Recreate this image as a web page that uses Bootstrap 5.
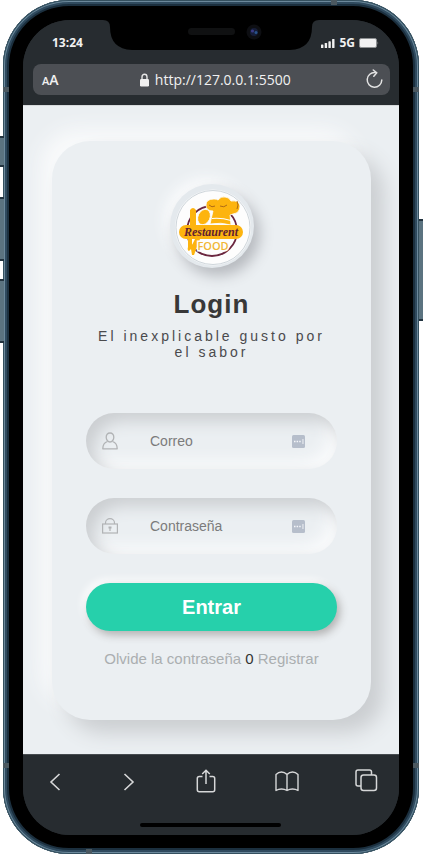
<!DOCTYPE html>
<html lang="es">
<head>
<meta charset="utf-8">
<meta name="viewport" content="width=device-width, initial-scale=1">
<title>Login</title>
<link href="https://cdn.jsdelivr.net/npm/bootstrap@5.3.0/dist/css/bootstrap.min.css" rel="stylesheet">
<style>
  body { font-family: "Liberation Sans", Arial, sans-serif; background: #fff; overflow-x: hidden; }

  /* Phone body */
  .phone { margin: 0 4px 0 3px; padding: 20px 20px 19px; border-radius: 66px; background: #000;
    box-shadow: inset 0 0 0 1px #34505f, inset 0 0 0 2px #6b889b, inset 0 0 0 4px #2f4a5e, inset 0 0 0 6px #1b2f3e; }
  .side-key { position: absolute; width: 4px; background: #5b7380; border-top: 2px solid #22333f; border-bottom: 2px solid #22333f; }
  .key-mute { left: -3px; top: 136px; height: 31px; }
  .key-up { left: -3px; top: 197px; height: 64px; }
  .key-down { left: -3px; top: 279px; height: 64px; }
  .key-power { right: -4px; top: 219px; height: 102px; }
  .band { position: absolute; width: 6px; height: 5px; background: #4b5860; }
  .band-tl { left: 0; top: 87px; } .band-tr { right: 0; top: 87px; }
  .band-bl { left: 0; bottom: 86px; } .band-br { right: 0; bottom: 86px; }
  .band-top { right: 82px; top: 0; } .band-bottom { left: 83px; bottom: 0; }
  .notch { position: absolute; top: 19px; left: 50%; transform: translateX(-50%); }

  /* Browser chrome */
  .screen { border-radius: 47px; background: #272c30; }
  .browser-top, .browser-bottom { font-family: "Open Sans", "Noto Sans", sans-serif; color: #f1f1f1; background: #272c30; }
  .status { height: 44px; padding: 13px 20px 0 29px; font-size: 12px; line-height: 20px; font-weight: 700; }
  .address { height: 31px; margin: 0 9px 10px 10px; padding: 0 7px 0 9px; border-radius: 8px; background: #4c4f54; font-size: 14px; line-height: 20px; font-weight: 500; }
  .address a { color: #f1f1f1; gap: 6px; padding-left: 6px; }
  .plain-btn { background: none; border: 0; padding: 0; color: inherit; line-height: 1; display: flex; align-items: center; justify-content: center; }
  .text-size { font-size: 11px; font-weight: 600; align-items: baseline; }
  .text-size span { font-size: 14px; }
  .browser-bottom { height: 81px; padding: 13px 21px 8px 20px; border-top: 1px solid #464b4f; }
  .tools { display: grid; grid-template-columns: 74fr 77fr 81fr 79fr 24px; color: #d6d7d8; }
  .tools button { width: 24px; height: 26px; }
  .home-bar { width: 141px; height: 4px; border-radius: 4px; background: #000; }

  /* Login page */
  .site { background: #ebeff2; padding: 35px 28px 34px 29px; overflow: hidden; border-top: 1px solid #d7dadc; }
  .login-box { padding: 43px 34px 51px; border-radius: 38px; background: #ebeff2;
    box-shadow: 13px 13px 20px #cbced1, -12px -12px 20px #f9fafb; }
  .brand-logo { width: 84px; height: 84px; border-radius: 50%; background: #e4e9ed; box-shadow: 6px 8px 14px #b7babf, -6px -6px 14px #fafbfc; }
  .heading { margin: 20px 0 8px; font-size: 26px; line-height: 32px; font-weight: 700; letter-spacing: 1px; color: #383838; }
  .tagline { margin: 0 0 53px; font-size: 14px; line-height: 16px; letter-spacing: 3px; color: #4a4a4d; }
  .field { height: 56px; padding: 0 32px 0 16px; border-radius: 28px; margin-bottom: 29px; color: #b1b3b5;
    box-shadow: inset 8px 8px 16px #cbced1, inset -8px -8px 16px #fafbfc; }
  .field svg { flex-shrink: 0; }
  .field input { width: 100px; min-width: 0; margin-left: 32px; padding: 0; border: 0; outline: 0; background: transparent; font-size: 14px; line-height: 20px; color: #555; }
  .field input::placeholder { color: #7b7b7b; opacity: 1; }
  .enter { height: 48px; border: 0; border-radius: 24px; background: #26d0ab; color: #fff; font-size: 20px; line-height: 24px; font-weight: 700;
    box-shadow: 3px 4px 8px #b1b1b1, -3px -3px 8px #fff; }
  .help { margin-top: 18px; font-size: 15px; line-height: 20px; color: #333; white-space: nowrap; }
  .help a { color: #aaaeb0; }
</style>
<script src="https://cdn.jsdelivr.net/npm/bootstrap@5.3.0/dist/js/bootstrap.bundle.min.js"></script>
</head>
<body>
<div class="phone position-relative min-vh-100 d-flex flex-column">
  <span class="side-key key-mute"></span><span class="side-key key-up"></span><span class="side-key key-down"></span><span class="side-key key-power"></span>
  <span class="band band-tl"></span><span class="band band-tr"></span><span class="band band-bl"></span><span class="band band-br"></span>
  <span class="band band-top"></span><span class="band band-bottom"></span>

  <div class="screen flex-grow-1 d-flex flex-column overflow-hidden">
    <header class="browser-top">
      <div class="status d-flex justify-content-between align-items-start">
        <span>13:24</span>
        <span class="d-flex align-items-center gap-1">
          <svg width="14" height="9" viewBox="0 0 14 9" fill="#f1f1f1" aria-hidden="true"><rect y="5.5" width="2.4" height="3.5" rx=".6"/><rect x="3.7" y="4" width="2.4" height="5" rx=".6"/><rect x="7.4" y="2.3" width="2.4" height="6.7" rx=".6"/><rect x="11.1" y="0" width="2.4" height="9" rx=".6"/></svg>
          <span>5G</span>
          <svg width="20" height="10" viewBox="0 0 20 10" aria-hidden="true"><rect x=".5" y=".5" width="17" height="9" rx="1.5" fill="#f1f1f1" stroke="#8c8f91"/><path d="M18.5 3.2q1.5 1.8 0 3.6z" fill="#8c8f91"/></svg>
        </span>
      </div>
      <div class="address d-flex align-items-center justify-content-between">
        <button class="plain-btn text-size" type="button" aria-label="Tamaño del texto">A<span>A</span></button>
        <a class="d-flex align-items-center text-decoration-none" href="#">
          <svg width="9" height="14" viewBox="0 0 9 14" aria-hidden="true"><path d="M2 6.5V4a2.5 2.7 0 0 1 5 0v2.5" fill="none" stroke="#e6e6e6" stroke-width="1.4"/><rect y="6" width="9" height="7.5" rx="1.2" fill="#f1f1f1"/></svg>
          http://127.0.0.1:5500</a>
        <button class="plain-btn" type="button" aria-label="Recargar">
          <svg width="17" height="21" viewBox="0 0 17 21" fill="none" stroke="#e2e2e2" stroke-width="1.5" stroke-linecap="round" stroke-linejoin="round"><path d="M9.2 3.6A7.3 7.3 0 1 0 15.8 11"/><path d="M7.3 1l3.500 2.800-3 3.400"/></svg>
        </button>
      </div>
    </header>

    <main class="site flex-grow-1">
      <section class="login-box text-center">
        <svg class="brand-logo" viewBox="0 0 84 84" role="img" aria-label="Restaurent Food">
          <circle cx="43" cy="43.500" r="38" fill="#f8f9fa"/>
          <circle cx="43" cy="43.500" r="37" fill="#fdfdfd" stroke="#c3cbd2" stroke-width=".8"/>
          <circle cx="42" cy="47" r="25" fill="none" stroke="#6b2740" stroke-width="1.800"/>
          <g fill="#fdb40f">
            <path d="M20 26q3-4 6 0v18h-6zM22 23v8M26 23v8"/>
            <ellipse cx="34" cy="33" rx="6" ry="8" transform="rotate(25 34 33)" stroke="#fdfdfd" stroke-width=".8"/>
            <path d="M40 40l3-13q-7 0-7-6 0-6 8-6 3 0 4 1 3-4 7-3 4 0 6 4 8-1 9 5 0 7-7 8l-3 1 1 10q-10-3-21-1z" stroke="#fdfdfd" stroke-width=".8"/>
            <path d="M18 55h4v6l3-6h5l-6 16h-2l-1-6-2 2q-2-1-1-4z"/>
          </g>
          <path d="M42 34.500q9-1 19 2" fill="none" stroke="#fff" stroke-width="1.200"/>
          <path d="M67 17q2 4 0 8M39 21q3 3 6 1M50 22q4 2 7-1" fill="none" stroke="#ad6b17" stroke-width="1"/>
          <rect x="9" y="41" width="64" height="14" rx="7" fill="#fdb40f"/>
          <text x="41" y="52" text-anchor="middle" font-family="Liberation Serif, serif" font-size="12" font-style="italic" font-weight="700" fill="#5f2132">Restaurent</text>
          <text x="43" y="66" text-anchor="middle" font-family="Open Sans, sans-serif" font-size="11" font-weight="600" fill="#f1b633" stroke="#fdfdfd" stroke-width="3" paint-order="stroke">FOOD</text>
        </svg>
        <h1 class="heading">Login</h1>
        <p class="tagline px-2">El inexplicable gusto por el sabor</p>
        <form>
          <div class="field d-flex align-items-center">
            <label for="correo" class="d-flex">
              <svg width="16" height="18" viewBox="0 0 16 18" fill="none" stroke="currentColor" stroke-width="1.300" stroke-linejoin="round" role="img" aria-label="Correo"><path d="M8 1C5.500 1 4.200 2.800 4.200 5.200S5.800 10 8 10s3.800-2.400 3.800-4.800S10.500 1 8 1z"/><path d="M5.500 9.500Q.8 11 .8 16.800h14.400Q15.200 11 10.500 9.500"/></svg></label>
            <input class="flex-grow-1" id="correo" type="email" placeholder="Correo">
            <svg width="13" height="13" viewBox="0 0 13 13" aria-hidden="true"><rect width="13" height="13" rx="1.500" fill="#b6becb"/><path d="M2 5.700h1.500v1.600H2zM4.600 5.700h1.500v1.600H4.600zM7.200 5.700h1.500v1.600H7.200zM10.500 4h.9v5h-.9z" fill="#f4f6f9"/></svg>
          </div>
          <div class="field d-flex align-items-center">
            <label for="clave" class="d-flex">
              <svg width="16" height="16" viewBox="0 0 16 16" fill="none" stroke="currentColor" stroke-width="1.200" role="img" aria-label="Contraseña"><rect x=".6" y="6" width="14.800" height="9" /><path d="M3.500 6V5a4.500 4.300 0 0 1 9 0v1M8 9.500V13"/><path d="M6.500 9.500h3" stroke-width="2"/></svg></label>
            <input class="flex-grow-1" id="clave" type="password" placeholder="Contraseña">
            <svg width="13" height="13" viewBox="0 0 13 13" aria-hidden="true"><rect width="13" height="13" rx="1.500" fill="#b6becb"/><path d="M2 5.700h1.500v1.600H2zM4.600 5.700h1.500v1.600H4.600zM7.200 5.700h1.500v1.600H7.200zM10.500 4h.9v5h-.9z" fill="#f4f6f9"/></svg>
          </div>
          <button class="enter w-100" type="button">Entrar</button>
        </form>
        <div class="help"><a class="text-decoration-none" href="#">Olvide la contraseña</a> 0 <a class="text-decoration-none" href="#">Registrar</a></div>
      </section>
    </main>

    <footer class="browser-bottom d-flex flex-column justify-content-between">
      <nav class="tools" aria-label="Navegador">
        <button class="plain-btn" type="button" aria-label="Atrás"><svg width="12" height="20" viewBox="0 0 12 20" fill="none" stroke="currentColor" stroke-width="1.600"><path d="M10.500 3L2 11l8.500 8"/></svg></button>
        <button class="plain-btn" type="button" aria-label="Adelante"><svg width="12" height="20" viewBox="0 0 12 20" fill="none" stroke="currentColor" stroke-width="1.600"><path d="M1.500 3L10 11l-8.500 8"/></svg></button>
        <button class="plain-btn" type="button" aria-label="Compartir"><svg width="20" height="25" viewBox="0 0 20 25" fill="none" stroke="currentColor" stroke-width="1.500"><path d="M6.500 7.500H3.300Q1.300 7.500 1.300 9.500v11.200q0 2 2 2h13.400q2 0 2-2V9.500q0-2-2-2h-3.200M10 15V1.500M6.200 5L10 1.300 13.800 5"/></svg></button>
        <button class="plain-btn" type="button" aria-label="Marcadores"><svg width="24" height="22" viewBox="0 0 24 22" fill="none" stroke="currentColor" stroke-width="1.400" stroke-linejoin="round"><path d="M12 4.500Q9.500 2 6.500 2T1 4.500v16Q3.500 19 6.500 19t5.500 1.500Q14.500 19 17.500 19t5.500 1.500v-16Q20.500 2 17.500 2T12 4.500zv16"/></svg></button>
        <button class="plain-btn" type="button" aria-label="Pestañas"><svg width="24" height="24" viewBox="0 0 24 24" fill="none" stroke="currentColor" stroke-width="1.500"><rect x="7" y="6" width="15.500" height="15.500" rx="2.500"/><path d="M7 17H4q-2 0-2-2V3q0-2 2-2H15.500q2 0 2 2v3"/></svg></button>
      </nav>
      <div class="home-bar mx-auto"></div>
    </footer>
  </div>

  <svg class="notch" width="216" height="31" viewBox="0 0 216 31" aria-hidden="true">
    <path d="M0 0h216v1q-7 0-7 7 0 22-22 23H29Q7 30 7 8 7 1 0 1z" fill="#000"/>
    <rect x="85" y="9" width="47" height="7" rx="3.500" fill="#101112"/>
    <circle cx="151" cy="13" r="7.500" fill="#0d0e12"/><circle cx="151" cy="13" r="4" fill="#161d38"/><circle cx="149.500" cy="12" r="1.600" fill="#3a3b86"/><circle cx="153" cy="13.500" r="1.500" fill="#28538c"/>
  </svg>
</div>
</body>
</html>
